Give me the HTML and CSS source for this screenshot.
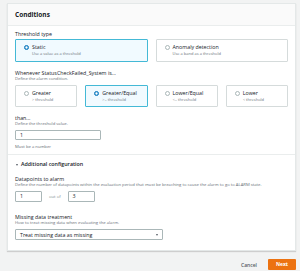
FILE: index.html
```html
<!DOCTYPE html>
<html lang="en">
<head>
    <meta charset="UTF-8">
    <title>Conditions</title>
    <link rel="stylesheet" href="styles.css">
</head>
<body>
    <div class="card">
        <div class="card-header">Conditions</div>
        <div class="card-body">
            <div class="label first">Threshold type</div>
            <div class="tiles two">
                <div class="tile selected">
                    <span class="radio on"></span>
                    <div>
                        <div class="tile-title">Static</div>
                        <div class="tile-sub">Use a value as a threshold</div>
                    </div>
                </div>
                <div class="tile">
                    <span class="radio"></span>
                    <div>
                        <div class="tile-title">Anomaly detection</div>
                        <div class="tile-sub">Use a band as a threshold</div>
                    </div>
                </div>
            </div>

            <div class="label">Whenever StatusCheckFailed_System is...</div>
            <div class="desc">Define the alarm condition.</div>
            <div class="tiles four">
                <div class="tile">
                    <span class="radio"></span>
                    <div>
                        <div class="tile-title">Greater</div>
                        <div class="tile-sub">&gt; threshold</div>
                    </div>
                </div>
                <div class="tile selected">
                    <span class="radio on"></span>
                    <div>
                        <div class="tile-title">Greater/Equal</div>
                        <div class="tile-sub">&gt;= threshold</div>
                    </div>
                </div>
                <div class="tile">
                    <span class="radio"></span>
                    <div>
                        <div class="tile-title">Lower/Equal</div>
                        <div class="tile-sub">&lt;= threshold</div>
                    </div>
                </div>
                <div class="tile">
                    <span class="radio"></span>
                    <div>
                        <div class="tile-title">Lower</div>
                        <div class="tile-sub">&lt; threshold</div>
                    </div>
                </div>
            </div>

            <div class="label">than...</div>
            <div class="desc">Define the threshold value.</div>
            <div class="input wide">1</div>
            <div class="hint">Must be a number</div>

            <div class="divider"></div>

            <div class="expander"><span class="caret"></span>Additional configuration</div>

            <div class="label">Datapoints to alarm</div>
            <div class="desc">Define the number of datapoints within the evaluation period that must be breaching to cause the alarm to go to ALARM state.</div>
            <div class="datapoints">
                <div class="input small">1</div>
                <span class="out-of">out of</span>
                <div class="input small">3</div>
            </div>

            <div class="label missing">Missing data treatment</div>
            <div class="desc">How to treat missing data when evaluating the alarm.</div>
            <div class="select">
                <span>Treat missing data as missing</span>
                <span class="select-caret"></span>
            </div>
        </div>
    </div>

    <div class="actions">
        <span class="cancel">Cancel</span>
        <span class="next">Next</span>
    </div>
</body>
</html>
```

FILE: styles.css
```css
* {
    box-sizing: border-box;
}

body {
    margin: 0;
    background: #f2f3f3;
    font-family: 'Open Sans', 'Liberation Sans', sans-serif;
    color: #16191f;
}

.card {
    width: 289px;
    margin: 3px 0 0 7px;
    background: white;
    border: 1px solid #e4e8e8;
    box-shadow: 0 1px 1px rgba(0,0,0,0.15);
}

.card-header {
    height: 22px;
    padding: 0 7px;
    background: #fafafa;
    border-bottom: 1px solid #eaeded;
    font-size: 6.5px;
    font-weight: 700;
    line-height: 21px;
}

.card-body {
    padding: 0 7px 10px;
}

.label {
    font-size: 5.3px;
    line-height: 6px;
    margin-top: 8px;
}

.label.first {
    margin-top: 5px;
    margin-bottom: 2px;
}

.label.missing {
    margin-top: 12px;
}

.desc {
    font-size: 4.2px;
    line-height: 5px;
    color: #687078;
    margin-bottom: 4px;
    white-space: nowrap;
}

.tiles {
    display: grid;
    gap: 8px;
}

.tiles.two {
    grid-template-columns: 1fr 1fr;
}

.tiles.four {
    grid-template-columns: repeat(4, 1fr);
}

.tile {
    height: 23px;
    border: 1px solid #d5dbdb;
    border-radius: 1px;
    padding: 3px 8px;
    display: flex;
    align-items: flex-start;
    gap: 3px;
}

.tiles.four .tile {
    height: 22px;
}

.tile.selected {
    border-color: #44b9d6;
    background: #f1faff;
}

.radio {
    flex: none;
    width: 5px;
    height: 5px;
    margin-top: 1.5px;
    border-radius: 50%;
    border: 1px solid #aab7b8;
    background: white;
}

.radio.on {
    border: 1.6px solid #0073bb;
    background: white;
    box-shadow: inset 0 0 0 0.3px #0073bb;
}

.tile-title {
    font-size: 5.3px;
    line-height: 8px;
}

.tile-sub {
    font-size: 4px;
    line-height: 5px;
    color: #687078;
}

.input {
    height: 10px;
    border: 1px solid #aab7b8;
    border-radius: 1px;
    padding: 0 4px;
    font-size: 5.3px;
    line-height: 8px;
}

.input.wide {
    width: 86px;
}

.hint {
    font-size: 4.2px;
    line-height: 5px;
    color: #687078;
    margin-top: 4px;
}

.divider {
    height: 1px;
    background: #eaeded;
    margin: 5px -7px 0;
}

.expander {
    display: flex;
    align-items: center;
    gap: 3px;
    font-size: 5.3px;
    font-weight: 600;
    line-height: 7px;
    margin-top: 6px;
    padding-left: 1px;
}

.caret {
    width: 0;
    height: 0;
    border-left: 1.8px solid transparent;
    border-right: 1.8px solid transparent;
    border-top: 2.5px solid #545b64;
}

.datapoints {
    display: flex;
    align-items: center;
    gap: 7px;
}

.input.small {
    width: 27px;
    height: 11px;
    line-height: 9px;
}

.out-of {
    font-size: 4.2px;
    color: #879596;
}

.select {
    width: 148px;
    height: 11px;
    border: 1px solid #aab7b8;
    border-radius: 1px;
    padding: 0 4px;
    display: flex;
    align-items: center;
    justify-content: space-between;
    font-size: 5.3px;
}

.select-caret {
    width: 0;
    height: 0;
    border-left: 1.6px solid transparent;
    border-right: 1.6px solid transparent;
    border-top: 2.2px solid #545b64;
}

.actions {
    display: flex;
    justify-content: flex-end;
    align-items: center;
    gap: 11px;
    margin: 8px 4px 0 0;
}

.cancel {
    font-size: 5px;
    font-weight: 600;
    color: #545b64;
}

.next {
    width: 28px;
    height: 11px;
    background: #ec7211;
    color: white;
    font-size: 5px;
    font-weight: 700;
    line-height: 11px;
    text-align: center;
    border-radius: 1px;
}
```
